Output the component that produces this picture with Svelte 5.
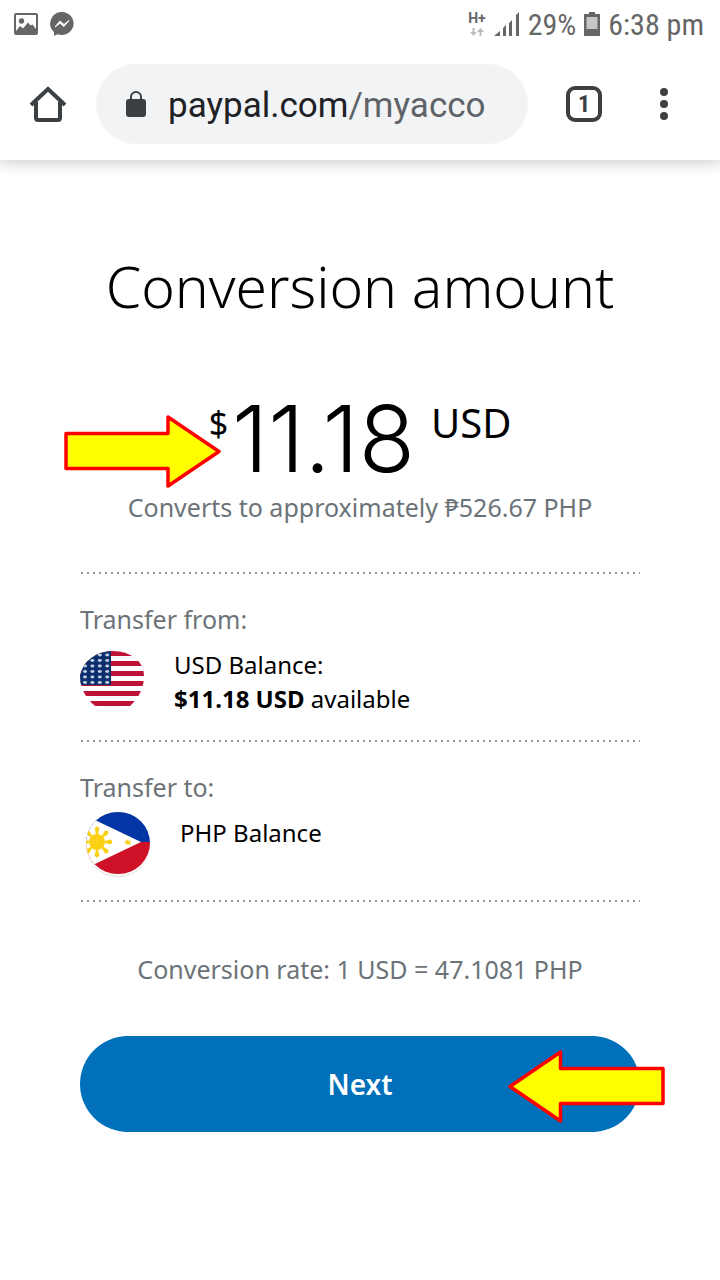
<script>
  const stripes = [0, 1, 2, 3, 4, 5];
  const starRows = [0, 1, 2, 3, 4, 5];
  const starCols = [0, 1, 2, 3];
  const rays = [0, 45, 90, 135, 180, 225, 270, 315];
</script>

<div class="screen">
  <header>
    <div class="status">
      <div class="group">
        <svg width="24" height="24" viewBox="0 0 24 24" aria-hidden="true">
          <rect x="1" y="2" width="22" height="20" fill="none" stroke="#666" stroke-width="2" rx="1" />
          <circle cx="7.5" cy="9" r="2.7" fill="#666" />
          <path d="M2 19 6 14l3 2.500 5-6 2.500 3 2-1 3.500 4.500v5H2z" fill="#666" />
        </svg>
        <svg width="24" height="25" viewBox="0 0 24 25" aria-hidden="true">
          <path d="M12 0a12 11.500 0 1 1-4.500 22.300L4 24v-4A11.500 11.500 0 0 1 12 0z" fill="#666" />
          <path d="m5 15 5-6 4 3.500L19 8.500l-5 6-4-3.300z" fill="#fff" stroke="#fff" stroke-width="1" />
        </svg>
      </div>
      <div class="group right">
        <div class="network">
          <span>H+</span>
          <svg width="14" height="8" viewBox="0 0 14 8" aria-hidden="true">
            <path d="M2.500 0h2v4H7L3.500 8 0 4h2.500zM9.500 8h2V4H14l-3.500-4L7 4h2.500z" fill="#bbb" />
          </svg>
        </div>
        <svg width="26" height="24" viewBox="0 0 26 24" aria-hidden="true">
          <path d="M0 24h6v-5zM9 24h3V13l-3 3zM15 24h3V8l-3 3zM22 24h3V0l-3 3z" fill="#666" />
        </svg>
        <span>29%</span>
        <svg width="16" height="24" viewBox="0 0 16 24" aria-hidden="true">
          <path d="M5 0h6v2h5v22H0V2h5z" fill="#666" />
          <path d="M2.500 5h11v12h-11z" fill="#c6c6c6" />
        </svg>
        <span>6:38 pm</span>
      </div>
    </div>

    <div class="toolbar">
      <button class="tool" aria-label="Home">
        <svg width="38" height="38" viewBox="0 0 38 38">
          <path d="M2 20 19 4l17 16M7 17v16q0 2 2 2h20q2 0 2-2V17" fill="none" stroke="#3c4043" stroke-width="4" />
        </svg>
      </button>
      <div class="address">
        <svg width="20" height="28" viewBox="0 0 20 28" aria-hidden="true">
          <path d="M5 11V7a5 5 0 0 1 10 0v4" fill="none" stroke="#3c4043" stroke-width="2" />
          <rect x="0" y="9" width="20" height="18" rx="3" fill="#3c4043" />
        </svg>
        <span class="url">paypal.com<span>/myacco</span></span>
      </div>
      <button class="tool tabs" aria-label="Open tabs"><span>1</span></button>
      <button class="tool" aria-label="Menu">
        <svg width="8" height="32" viewBox="0 0 8 32">
          <circle cx="4" cy="4" r="4" /><circle cx="4" cy="16" r="4" /><circle cx="4" cy="28" r="4" />
        </svg>
      </button>
    </div>
  </header>

  <main>
    <h1>Conversion amount</h1>

    <div class="amount">
      <span class="sign">$</span><span class="value">11.18</span><span class="code">USD</span>
      <svg class="arrow first" width="158" height="74" viewBox="0 0 158 74" aria-hidden="true">
        <path d="M2 19.500H104V3L155 37.500 104 72V54.500H2z" />
      </svg>
    </div>
    <p class="approx">Converts to approximately ₱526.67 PHP</p>

    <section class="from">
      <h2>Transfer from:</h2>
      <div class="balance">
        <svg width="64" height="60" viewBox="0 0 64 60" role="img" aria-label="United States flag">
          <defs>
            <clipPath id="us"><path d="M0 28Q2 17 11 10 21 3 33 3q13 0 22 7 9 7 9 18 0 17-14 30H15Q0 45 0 28z" /></clipPath>
          </defs>
          <ellipse cx="32" cy="32" rx="31" ry="28" fill="#eee" />
          <ellipse cx="32" cy="31" rx="32" ry="28" fill="#fff" />
          <g clip-path="url(#us)">
            <rect width="64" height="60" fill="#fff" />
            {#each stripes as i}<rect x="0" y={3 + i * 10} width="64" height="5" fill="#bd1135" />{/each}
            <rect width="31" height="37" fill="#0b2e6d" />
            {#each starRows as r}{#each starCols as c}<ellipse cx={5 + c * 7.4} cy={7 + r * 5.5} rx="2" ry="1.400" fill="#c3cee2" />{/each}{/each}
          </g>
        </svg>
        <div>USD Balance:<br /><strong>$11.18 USD</strong> available</div>
      </div>
    </section>

    <section class="to">
      <h2>Transfer to:</h2>
      <div class="balance">
        <svg width="66" height="66" viewBox="0 0 66 66" role="img" aria-label="Philippine flag">
          <defs><clipPath id="ph"><ellipse cx="34" cy="31" rx="32" ry="31" /></clipPath></defs>
          <circle cx="34" cy="33.500" r="32" fill="#eaeaea" />
          <ellipse cx="34" cy="32.500" rx="32" ry="31" fill="#fff" />
          <g clip-path="url(#ph)">
            <rect width="66" height="30" fill="#0435a5" />
            <rect y="30" width="66" height="36" fill="#ce1126" />
            <path d="M-8-1 57 30-8 61z" fill="#fff" />
            <g transform="translate(13 30)" fill="#fbd116">
              {#each rays as a}<path d="M7-1 15-3 17 0l-2 3-8-2z" transform="rotate({a}) scale(.92 .8)" />{/each}
              <circle r="8" />
            </g>
            <path d="m43 27 1 2 3-1-1 2 1 3-3-1-2 1v-2l-2-1 2-1z" fill="#fbd116" />
          </g>
        </svg>
        <div>PHP Balance</div>
      </div>
    </section>

    <p class="rate">Conversion rate: 1 USD = 47.1081 PHP</p>

    <div class="action">
      <button class="next">Next</button>
      <svg class="arrow second" width="158" height="74" viewBox="0 0 158 74" aria-hidden="true">
        <path d="M156 19.500H53.500V3L3 37.500 53.500 72V54.500H156z" />
      </svg>
    </div>
  </main>
</div>

<style>
  :global(body) { margin: 0; background: #fff; }
  .screen { font-family: "Noto Sans", sans-serif; color: #000; overflow: hidden; }
  button { font: inherit; border: 0; cursor: pointer; }
  svg { display: block; flex: none; }
  h1, h2, p { margin: 0; }

  header {
    background: #fff;
    box-shadow: 0 0 14px 2px rgba(0, 0, 0, .22);
  }
  .status {
    display: flex;
    justify-content: space-between;
    align-items: center;
    height: 48px;
    padding: 0 16px 0 14px;
    color: #666;
    font: 30px/48px "Roboto Condensed", Roboto, sans-serif;
  }
  .status .group > span { padding-top: 2px; }
  .group { display: flex; align-items: center; gap: 12px; }
  .group.right { gap: 8px; }
  .network {
    display: flex;
    flex-direction: column;
    align-items: center;
    gap: 4px;
    font: bold 14px/12px Roboto, sans-serif;
  }
  .toolbar { display: flex; align-items: center; height: 112px; }
  .tool {
    display: flex;
    align-items: center;
    justify-content: center;
    width: 96px;
    height: 96px;
    padding: 0;
    background: none;
    color: #3c4043;
    fill: #3c4043;
  }
  .tool:last-child { width: 80px; margin-right: 16px; }
  .address {
    display: flex;
    align-items: center;
    gap: 22px;
    flex: 1;
    min-width: 0;
    height: 80px;
    padding: 0 30px;
    box-sizing: border-box;
    border-radius: 40px;
    background: #f1f3f4;
    margin-right: 16px;
  }
  .url {
    overflow: hidden;
    white-space: nowrap;
    font: 35px/48px Roboto, sans-serif;
    padding-top: 4px;
    color: #202124;
  }
  .url span { color: #5f6368; }
  .tool.tabs { width: 80px; }
  .tabs span {
    width: 28px;
    height: 28px;
    border: 4px solid #3c4043;
    border-radius: 9px;
    font: bold 24px/28px "Roboto Condensed", Roboto, sans-serif;
  }

  main {
    display: flex;
    flex-direction: column;
    padding: 84px 80px 64px;
    font-size: 24px;
    line-height: 34px;
  }
  h1 {
    margin: 0 -40px;
    text-align: center;
    font-size: 57px;
    line-height: 84px;
    font-weight: 300;
  }
  .amount {
    position: relative;
    display: flex;
    justify-content: center;
    height: 98px;
    margin-top: 64px;
  }
  .sign { margin-right: 4px; font-size: 34px; line-height: 62px; }
  .value {
    font: 300 92px/94px Inter, sans-serif;
  }
  .code { margin-left: 16px; font-size: 40px; line-height: 62px; }
  .approx, .rate { text-align: center; font-size: 25px; color: #6c7378; }
  section {
    padding-top: 30px;
    background: repeating-linear-gradient(90deg, transparent 0 1px, #999 1px 3px, transparent 3px 6px) top / 100% 2px no-repeat;
  }
  .from { height: 138px; margin-top: 48px; }
  .to {
    height: 132px;
    background:
      repeating-linear-gradient(90deg, transparent 0 1px, #999 1px 3px, transparent 3px 6px) top / 100% 2px no-repeat,
      repeating-linear-gradient(90deg, transparent 0 1px, #999 1px 3px, transparent 3px 6px) bottom / 100% 2px no-repeat;
  }
  h2 { font-size: 25px; line-height: 34px; font-weight: 400; color: #6c7378; }
  .balance { display: flex; gap: 30px; margin-top: 12px; }
  .to .balance { margin: 8px 0 0 4px; }
  .to .balance div { margin-top: 4px; }
  .rate { margin-top: 50px; }
  .action { position: relative; margin-top: 50px; }
  .next {
    display: block;
    width: 100%;
    height: 96px;
    border-radius: 48px;
    background: #0070ba;
    color: #fff;
    font-size: 28px;
    font-weight: 600;
  }
  .arrow { position: absolute; pointer-events: none; fill: #ff0; stroke: #f00; stroke-width: 3.5; stroke-linejoin: round; }
  .first { left: -16px; top: 22px; }
  .second { right: -25px; top: 13px; }
</style>
